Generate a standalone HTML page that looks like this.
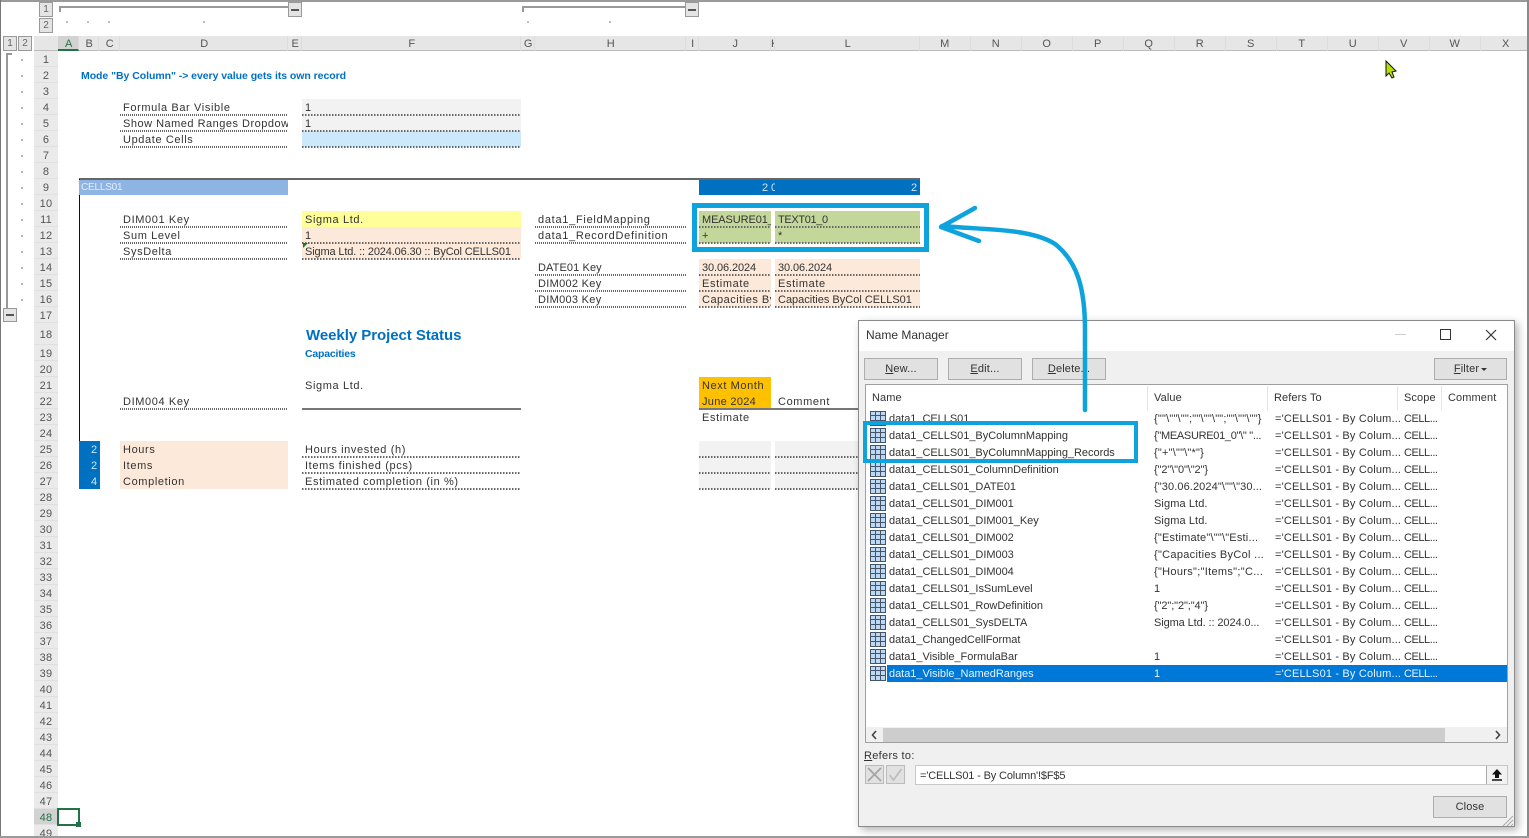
<!DOCTYPE html>
<html><head><meta charset="utf-8"><title>Name Manager</title>
<style>
html,body{margin:0;padding:0;background:#fff}
#p{position:relative;width:1529px;height:838px;overflow:hidden;background:#fff;font:11px "Liberation Sans",sans-serif;color:#333;letter-spacing:.62px;filter:blur(.35px)}
#p div{position:absolute;box-sizing:border-box;white-space:nowrap}
.t{height:16px;line-height:16px}
.dl{height:2px;background:repeating-linear-gradient(90deg,#666 0 1px,#fff 1px 2px)}
.dd{height:2px;background:repeating-linear-gradient(90deg,#666 0 1.5px,transparent 1.5px 3px)}
.dot{width:2px;height:2px;background:#bbb}
.h{top:36px;height:15px;line-height:17px;text-align:center;color:#555;border-right:1px solid #dcdcdc}
.g{padding-left:2px}
#rows{left:34px;top:51px;width:24px;background:#eaeaea;height:787px}
#rows div{position:static!important;height:16px;line-height:18px;text-align:center;color:#555;border-bottom:1px solid #e0e0e0;font-size:11px;letter-spacing:.2px}
.ob{background:#e4e4e4;border:1px solid #999;color:#666;text-align:center;font-size:10px;line-height:13px;letter-spacing:0}
.b{background:#e1e1e1;border:1px solid #adadad;text-align:center;line-height:20px;color:#333;height:22px;letter-spacing:.15px}
u{text-decoration:underline}
.i{left:870px;width:16px;height:15px;border:1px solid #44546a;background:linear-gradient(#44546a,#44546a) 0 3px/100% 1px no-repeat,linear-gradient(#44546a,#44546a) 0 8px/100% 1px no-repeat,linear-gradient(#44546a,#44546a) 4px 0/1px 100% no-repeat,linear-gradient(#44546a,#44546a) 9px 0/1px 100% no-repeat,#bcd8f3}
.n{left:889px;letter-spacing:-.03px}.v{left:1154px}.r{left:1275px;letter-spacing:.17px}.s{left:1404px;letter-spacing:-.45px}
.hd{letter-spacing:.1px}
</style></head><body><div id="p">

<!-- column headers -->
<div style="left:34px;top:36px;width:1493px;height:15px;background:#e6e6e6"></div>
<div style="left:34px;top:50px;width:1493px;height:1px;background:#bbb"></div>
<div class="h g" style="left:58px;width:21px;background:#d2d2d2;border-bottom:2px solid #217346;color:#217346">A</div>
<div class="h g" style="left:79px;width:20px">B</div>
<div class="h g" style="left:99px;width:21px">C</div>
<div class="h g" style="left:120px;width:168px">D</div>
<div class="h g" style="left:288px;width:14px">E</div>
<div class="h g" style="left:302px;width:219px">F</div>
<div class="h g" style="left:521px;width:14px">G</div>
<div class="h g" style="left:535px;width:151px">H</div>
<div class="h g" style="left:686px;width:13px">I</div>
<div class="h g" style="left:699px;width:72px">J</div>
<div class="h" style="left:771px;width:4px;overflow:hidden">K</div>
<div class="h g" style="left:775px;width:145px">L</div>
<div class="h" style="left:920px;width:51px">M</div>
<div class="h" style="left:971px;width:51px">N</div>
<div class="h" style="left:1022px;width:51px">O</div>
<div class="h" style="left:1073px;width:51px">P</div>
<div class="h" style="left:1124px;width:51px">Q</div>
<div class="h" style="left:1175px;width:51px">R</div>
<div class="h" style="left:1226px;width:51px">S</div>
<div class="h" style="left:1277px;width:51px">T</div>
<div class="h" style="left:1328px;width:51px">U</div>
<div class="h" style="left:1379px;width:51px">V</div>
<div class="h" style="left:1430px;width:51px">W</div>
<div class="h" style="left:1481px;width:51px">X</div>

<!-- row headers -->
<div id="rows"><div>1</div><div>2</div><div>3</div><div>4</div><div>5</div><div>6</div><div>7</div><div>8</div><div>9</div><div>10</div><div>11</div><div>12</div><div>13</div><div>14</div><div>15</div><div>16</div><div>17</div><div style="height:22px;line-height:24px">18</div><div>19</div><div>20</div><div>21</div><div>22</div><div>23</div><div>24</div><div>25</div><div>26</div><div>27</div><div>28</div><div>29</div><div>30</div><div>31</div><div>32</div><div>33</div><div>34</div><div>35</div><div>36</div><div>37</div><div>38</div><div>39</div><div>40</div><div>41</div><div>42</div><div>43</div><div>44</div><div>45</div><div>46</div><div>47</div><div style="background:#d2d2d2;color:#217346">48</div><div>49</div></div>

<!-- outline controls -->
<div class="ob" style="left:39px;top:2px;width:14px;height:15px">1</div>
<div class="ob" style="left:39px;top:18px;width:14px;height:15px">2</div>
<div class="ob" style="left:3px;top:36px;width:14px;height:15px">1</div>
<div class="ob" style="left:18px;top:36px;width:14px;height:15px">2</div>
<div style="left:59px;top:6px;width:230px;height:2px;background:#999"></div>
<div style="left:59px;top:6px;width:2px;height:6px;background:#999"></div>
<div class="ob" style="left:288px;top:2px;width:14px;height:15px"></div>
<div style="left:291px;top:9px;width:8px;height:2px;background:#555"></div>
<div style="left:522px;top:6px;width:164px;height:2px;background:#999"></div>
<div style="left:522px;top:6px;width:2px;height:6px;background:#999"></div>
<div class="ob" style="left:685px;top:2px;width:14px;height:15px"></div>
<div style="left:688px;top:9px;width:8px;height:2px;background:#555"></div>
<div class="dot" style="left:66px;top:21px"></div><div class="dot" style="left:87px;top:21px"></div><div class="dot" style="left:108px;top:21px"></div><div class="dot" style="left:203px;top:21px"></div><div class="dot" style="left:527px;top:21px"></div><div class="dot" style="left:609px;top:21px"></div>
<div style="left:6px;top:53px;width:6px;height:2px;background:#999"></div>
<div style="left:6px;top:53px;width:2px;height:258px;background:#999"></div>
<div class="ob" style="left:3px;top:308px;width:14px;height:14px"></div>
<div style="left:6px;top:314px;width:8px;height:2px;background:#555"></div>
<div class="dot" style="left:21px;top:59px"></div><div class="dot" style="left:21px;top:75px"></div><div class="dot" style="left:21px;top:91px"></div><div class="dot" style="left:21px;top:107px"></div><div class="dot" style="left:21px;top:123px"></div><div class="dot" style="left:21px;top:139px"></div><div class="dot" style="left:21px;top:155px"></div><div class="dot" style="left:21px;top:171px"></div><div class="dot" style="left:21px;top:187px"></div><div class="dot" style="left:21px;top:203px"></div><div class="dot" style="left:21px;top:219px"></div><div class="dot" style="left:21px;top:235px"></div><div class="dot" style="left:21px;top:251px"></div><div class="dot" style="left:21px;top:267px"></div><div class="dot" style="left:21px;top:283px"></div><div class="dot" style="left:21px;top:299px"></div>

<!-- sheet fills -->
<div style="left:302px;top:99px;width:219px;height:32px;background:#f2f2f2"></div>
<div style="left:302px;top:131px;width:219px;height:16px;background:#cce9fb"></div>
<div style="left:79px;top:178px;width:841px;height:2px;background:#666"></div>
<div style="left:79px;top:179px;width:1px;height:310px;background:#111"></div>
<div style="left:79px;top:180px;width:209px;height:15px;background:#8eb4e3"></div>
<div style="left:699px;top:180px;width:221px;height:15px;background:#0070c0"></div>
<div style="left:302px;top:211px;width:219px;height:16px;background:#ffff99"></div>
<div style="left:302px;top:227px;width:219px;height:32px;background:#fde9d9"></div>
<div style="left:699px;top:211px;width:72px;height:32px;background:#c4d79b"></div>
<div style="left:775px;top:211px;width:145px;height:32px;background:#c4d79b"></div>
<div style="left:699px;top:259px;width:72px;height:48px;background:#fde9d9"></div>
<div style="left:775px;top:259px;width:145px;height:48px;background:#fde9d9"></div>
<div style="left:699px;top:377px;width:72px;height:32px;background:#ffc000"></div>
<div style="left:79px;top:441px;width:21px;height:48px;background:#0070c0"></div>
<div style="left:120px;top:441px;width:168px;height:48px;background:#fde9d9"></div>
<div style="left:699px;top:441px;width:72px;height:48px;background:#f2f2f2"></div>
<div style="left:775px;top:441px;width:90px;height:48px;background:#f2f2f2"></div>

<!-- dotted -->
<div class="dl" style="left:120px;top:114px;width:168px"></div><div class="dl" style="left:120px;top:130px;width:168px"></div><div class="dl" style="left:120px;top:146px;width:168px"></div>
<div class="dd" style="left:302px;top:114px;width:219px"></div><div class="dd" style="left:302px;top:130px;width:219px"></div><div class="dd" style="left:302px;top:146px;width:219px"></div>
<div class="dl" style="left:120px;top:226px;width:168px"></div><div class="dl" style="left:120px;top:242px;width:168px"></div><div class="dl" style="left:120px;top:258px;width:168px"></div>
<div class="dd" style="left:302px;top:242px;width:219px"></div><div class="dd" style="left:302px;top:258px;width:219px"></div>
<div class="dl" style="left:535px;top:226px;width:151px"></div><div class="dl" style="left:535px;top:242px;width:151px"></div>
<div class="dl" style="left:535px;top:274px;width:151px"></div><div class="dl" style="left:535px;top:290px;width:151px"></div><div class="dl" style="left:535px;top:306px;width:151px"></div>
<div class="dd" style="left:699px;top:226px;width:72px"></div><div class="dd" style="left:775px;top:226px;width:145px"></div>
<div class="dd" style="left:699px;top:242px;width:72px"></div><div class="dd" style="left:775px;top:242px;width:145px"></div>
<div class="dd" style="left:699px;top:274px;width:72px"></div><div class="dd" style="left:775px;top:274px;width:145px"></div>
<div class="dd" style="left:699px;top:290px;width:72px"></div><div class="dd" style="left:775px;top:290px;width:145px"></div>
<div class="dd" style="left:699px;top:306px;width:72px"></div><div class="dd" style="left:775px;top:306px;width:145px"></div>
<div class="dd" style="left:302px;top:456px;width:219px"></div><div class="dd" style="left:302px;top:472px;width:219px"></div><div class="dd" style="left:302px;top:488px;width:219px"></div>
<div class="dd" style="left:699px;top:456px;width:72px"></div><div class="dd" style="left:699px;top:472px;width:72px"></div><div class="dd" style="left:699px;top:488px;width:72px"></div>
<div class="dd" style="left:775px;top:456px;width:90px"></div><div class="dd" style="left:775px;top:472px;width:90px"></div><div class="dd" style="left:775px;top:488px;width:90px"></div>
<div class="dl" style="left:120px;top:408px;width:168px"></div>
<div style="left:302px;top:408px;width:219px;height:2px;background:#777"></div>
<div style="left:699px;top:408px;width:165px;height:2px;background:#777"></div>

<!-- sheet text -->
<div style="left:0;top:1px;width:0;height:0">
<div class="t" style="left:81px;top:67px;color:#0070c0;font-weight:bold;font-size:10.5px;letter-spacing:-.05px">Mode "By Column" -&gt; every value gets its own record</div>
<div class="t" style="left:123px;top:99px">Formula Bar Visible</div>
<div class="t" style="left:123px;top:115px;width:165px;overflow:hidden;letter-spacing:.5px">Show Named Ranges Dropdown</div>
<div class="t" style="left:123px;top:131px">Update Cells</div>
<div class="t" style="left:305px;top:99px">1</div>
<div class="t" style="left:305px;top:115px">1</div>
<div class="t" style="left:81px;top:179px;color:#e4eefa;letter-spacing:-.2px;font-size:10px">CELLS01</div>
<div class="t" style="left:762px;top:179px;color:#cfe6f7;letter-spacing:2px">2</div>
<div class="t" style="left:771px;top:179px;color:#cfe6f7;width:4px;overflow:hidden">0</div>
<div class="t" style="left:911px;top:179px;color:#cfe6f7">2</div>
<div class="t" style="left:123px;top:211px">DIM001 Key</div>
<div class="t" style="left:123px;top:227px">Sum Level</div>
<div class="t" style="left:123px;top:243px">SysDelta</div>
<div class="t" style="left:305px;top:211px">Sigma Ltd.</div>
<div class="t" style="left:305px;top:227px">1</div>
<div class="t" style="left:305px;top:243px;letter-spacing:-.14px">Sigma Ltd. :: 2024.06.30 :: ByCol CELLS01</div>
<div style="left:303px;top:242px;width:0;height:0;border-top:5px solid #1b7a2c;border-right:5px solid transparent"></div>
<div class="t" style="left:538px;top:211px;letter-spacing:.72px">data1_FieldMapping</div>
<div class="t" style="left:538px;top:227px;letter-spacing:.7px">data1_RecordDefinition</div>
<div class="t" style="left:538px;top:259px;letter-spacing:.1px">DATE01 Key</div>
<div class="t" style="left:538px;top:275px;letter-spacing:.3px">DIM002 Key</div>
<div class="t" style="left:538px;top:291px;letter-spacing:.3px">DIM003 Key</div>
<div class="t" style="left:702px;top:211px;width:69px;overflow:hidden;letter-spacing:-.1px">MEASURE01_0</div>
<div class="t" style="left:778px;top:211px;letter-spacing:-.35px">TEXT01_0</div>
<div class="t" style="left:702px;top:227px">+</div>
<div class="t" style="left:778px;top:227px">*</div>
<div class="t" style="left:702px;top:259px;letter-spacing:-.1px">30.06.2024</div>
<div class="t" style="left:778px;top:259px;letter-spacing:-.1px">30.06.2024</div>
<div class="t" style="left:702px;top:275px">Estimate</div>
<div class="t" style="left:778px;top:275px">Estimate</div>
<div class="t" style="left:702px;top:291px;width:69px;overflow:hidden;letter-spacing:.5px">Capacities ByCol</div>
<div class="t" style="left:778px;top:291px;letter-spacing:0">Capacities ByCol CELLS01</div>
<div class="t" style="left:306px;top:327px;color:#0070c0;font-weight:bold;font-size:15px;letter-spacing:-.05px">Weekly Project Status</div>
<div class="t" style="left:305px;top:345px;color:#0070c0;font-weight:bold;font-size:10.5px;letter-spacing:-.2px">Capacities</div>
<div class="t" style="left:305px;top:377px">Sigma Ltd.</div>
<div class="t" style="left:123px;top:393px">DIM004 Key</div>
<div class="t" style="left:702px;top:377px;letter-spacing:.6px">Next Month</div>
<div class="t" style="left:702px;top:393px;letter-spacing:.3px">June 2024</div>
<div class="t" style="left:778px;top:393px">Comment</div>
<div class="t" style="left:702px;top:409px">Estimate</div>
<div class="t" style="left:91px;top:441px;color:#cfe6f7">2</div>
<div class="t" style="left:91px;top:457px;color:#cfe6f7">2</div>
<div class="t" style="left:91px;top:473px;color:#cfe6f7">4</div>
<div class="t" style="left:123px;top:441px">Hours</div>
<div class="t" style="left:123px;top:457px">Items</div>
<div class="t" style="left:123px;top:473px">Completion</div>
<div class="t" style="left:305px;top:441px">Hours invested (h)</div>
<div class="t" style="left:305px;top:457px">Items finished (pcs)</div>
<div class="t" style="left:305px;top:473px">Estimated completion (in %)</div>
</div>

<!-- selected cell -->
<div style="left:57px;top:808px;width:23px;height:18px;border:2px solid #217346"></div>
<div style="left:76px;top:822px;width:5px;height:5px;background:#217346;border:0"></div>

<!-- dialog -->
<div style="left:858px;top:320px;width:657px;height:507px;background:#f0f0f0;border:1px solid #8a8a8a;box-shadow:3px 3px 8px rgba(0,0,0,.3)"></div>
<div style="left:859px;top:321px;width:655px;height:30px;background:#fff"></div>
<div class="t" style="left:866px;top:327px;font-size:12px;letter-spacing:0">Name Manager</div>
<div style="left:1395px;top:334px;width:11px;height:1px;background:#ccc"></div>
<div style="left:1440px;top:329px;width:11px;height:11px;border:1.5px solid #333"></div>
<svg style="position:absolute;left:1485px;top:329px" width="12" height="12"><path d="M1 1L11 11M11 1L1 11" stroke="#333" stroke-width="1.2" fill="none"/></svg>
<div class="b" style="left:864px;top:358px;width:74px"><u>N</u>ew...</div>
<div class="b" style="left:948px;top:358px;width:74px"><u>E</u>dit...</div>
<div class="b" style="left:1032px;top:358px;width:74px"><u>D</u>elete...</div>
<div class="b" style="left:1434px;top:358px;width:73px;height:22px;padding-right:8px"><u>F</u>ilter</div>
<div style="left:1481px;top:368px;width:0;height:0;border-left:3px solid transparent;border-right:3px solid transparent;border-top:3px solid #333"></div>
<div style="left:865px;top:384px;width:643px;height:359px;background:#fff;border:1px solid #a0a0a0"></div>
<div class="t hd" style="left:872px;top:390px">Name</div>
<div class="t hd" style="left:1154px;top:390px">Value</div>
<div class="t hd" style="left:1274px;top:390px">Refers To</div>
<div class="t hd" style="left:1404px;top:390px">Scope</div>
<div class="t hd" style="left:1448px;top:390px">Comment</div>
<div style="left:1147px;top:386px;width:1px;height:24px;background:#e5e5e5"></div>
<div style="left:1267px;top:386px;width:1px;height:24px;background:#e5e5e5"></div>
<div style="left:1397px;top:386px;width:1px;height:24px;background:#e5e5e5"></div>
<div style="left:1441px;top:386px;width:1px;height:24px;background:#e5e5e5"></div>

<div style="left:887px;top:665px;width:620px;height:17px;background:#0078d7"></div>

<div class="i" style="top:411px"></div><div class="i" style="top:428px"></div><div class="i" style="top:445px"></div><div class="i" style="top:462px"></div><div class="i" style="top:479px"></div><div class="i" style="top:496px"></div><div class="i" style="top:513px"></div><div class="i" style="top:530px"></div><div class="i" style="top:547px"></div><div class="i" style="top:564px"></div><div class="i" style="top:581px"></div><div class="i" style="top:598px"></div><div class="i" style="top:615px"></div><div class="i" style="top:632px"></div><div class="i" style="top:649px"></div><div class="i" style="top:666px"></div>

<div class="t n" style="top:411px">data1_CELLS01</div>
<div class="t n" style="top:428px">data1_CELLS01_ByColumnMapping</div>
<div class="t n" style="top:445px">data1_CELLS01_ByColumnMapping_Records</div>
<div class="t n" style="top:462px">data1_CELLS01_ColumnDefinition</div>
<div class="t n" style="top:479px">data1_CELLS01_DATE01</div>
<div class="t n" style="top:496px">data1_CELLS01_DIM001</div>
<div class="t n" style="top:513px">data1_CELLS01_DIM001_Key</div>
<div class="t n" style="top:530px">data1_CELLS01_DIM002</div>
<div class="t n" style="top:547px">data1_CELLS01_DIM003</div>
<div class="t n" style="top:564px">data1_CELLS01_DIM004</div>
<div class="t n" style="top:581px">data1_CELLS01_IsSumLevel</div>
<div class="t n" style="top:598px">data1_CELLS01_RowDefinition</div>
<div class="t n" style="top:615px">data1_CELLS01_SysDELTA</div>
<div class="t n" style="top:632px">data1_ChangedCellFormat</div>
<div class="t n" style="top:649px">data1_Visible_FormulaBar</div>
<div class="t n" style="top:666px;color:#e8f4fd">data1_Visible_NamedRanges</div>

<div class="t v" style="top:411px;letter-spacing:.2px">{""\""\"";""\""\"";""\""\""}</div>
<div class="t v" style="top:428px;letter-spacing:-.3px">{"MEASURE01_0"\" "...</div>
<div class="t v" style="top:445px;letter-spacing:.2px">{"+"\""\"*"}</div>
<div class="t v" style="top:462px;letter-spacing:-.1px">{"2"\"0"\"2"}</div>
<div class="t v" style="top:479px;letter-spacing:.1px">{"30.06.2024"\""\"30...</div>
<div class="t v" style="top:496px;letter-spacing:.1px">Sigma Ltd.</div>
<div class="t v" style="top:513px;letter-spacing:.1px">Sigma Ltd.</div>
<div class="t v" style="top:530px;letter-spacing:.2px">{"Estimate"\""\"Esti...</div>
<div class="t v" style="top:547px;letter-spacing:.3px">{"Capacities ByCol ...</div>
<div class="t v" style="top:564px;letter-spacing:.3px">{"Hours";"Items";"C...</div>
<div class="t v" style="top:581px">1</div>
<div class="t v" style="top:598px;letter-spacing:-.1px">{"2";"2";"4"}</div>
<div class="t v" style="top:615px;letter-spacing:-.1px">Sigma Ltd. :: 2024.0...</div>
<div class="t v" style="top:649px">1</div>
<div class="t v" style="top:666px;color:#e8f4fd">1</div>

<div class="t r" style="top:411px">='CELLS01 - By Colum...</div>
<div class="t r" style="top:428px">='CELLS01 - By Colum...</div>
<div class="t r" style="top:445px">='CELLS01 - By Colum...</div>
<div class="t r" style="top:462px">='CELLS01 - By Colum...</div>
<div class="t r" style="top:479px">='CELLS01 - By Colum...</div>
<div class="t r" style="top:496px">='CELLS01 - By Colum...</div>
<div class="t r" style="top:513px">='CELLS01 - By Colum...</div>
<div class="t r" style="top:530px">='CELLS01 - By Colum...</div>
<div class="t r" style="top:547px">='CELLS01 - By Colum...</div>
<div class="t r" style="top:564px">='CELLS01 - By Colum...</div>
<div class="t r" style="top:581px">='CELLS01 - By Colum...</div>
<div class="t r" style="top:598px">='CELLS01 - By Colum...</div>
<div class="t r" style="top:615px">='CELLS01 - By Colum...</div>
<div class="t r" style="top:632px">='CELLS01 - By Colum...</div>
<div class="t r" style="top:649px">='CELLS01 - By Colum...</div>
<div class="t r" style="top:666px;color:#e8f4fd">='CELLS01 - By Colum...</div>

<div class="t s" style="top:411px">CELL...</div><div class="t s" style="top:428px">CELL...</div><div class="t s" style="top:445px">CELL...</div><div class="t s" style="top:462px">CELL...</div><div class="t s" style="top:479px">CELL...</div><div class="t s" style="top:496px">CELL...</div><div class="t s" style="top:513px">CELL...</div><div class="t s" style="top:530px">CELL...</div><div class="t s" style="top:547px">CELL...</div><div class="t s" style="top:564px">CELL...</div><div class="t s" style="top:581px">CELL...</div><div class="t s" style="top:598px">CELL...</div><div class="t s" style="top:615px">CELL...</div><div class="t s" style="top:632px">CELL...</div><div class="t s" style="top:649px">CELL...</div><div class="t s" style="top:666px;color:#e8f4fd">CELL...</div>

<!-- scrollbar -->
<div style="left:866px;top:727px;width:641px;height:15px;background:#f0f0f0"></div>
<div style="left:883px;top:728px;width:562px;height:14px;background:#cdcdcd"></div>
<svg style="position:absolute;left:870px;top:730px" width="10" height="10"><path d="M6 1L2.5 5L6 9" stroke="#444" stroke-width="1.6" fill="none"/></svg>
<svg style="position:absolute;left:1493px;top:730px" width="10" height="10"><path d="M3 1L6.5 5L3 9" stroke="#444" stroke-width="1.6" fill="none"/></svg>

<div class="t" style="left:864px;top:748px;letter-spacing:.3px"><u>R</u>efers to:</div>
<div style="left:865px;top:765px;width:19px;height:19px;background:#e1e1e1;border:1px solid #bbb"></div>
<svg style="position:absolute;left:867px;top:767px" width="15" height="15"><path d="M1 1L14 14M14 1L1 14" stroke="#a5a5a5" stroke-width="1.8" fill="none"/></svg>
<div style="left:886px;top:765px;width:19px;height:19px;background:#e1e1e1;border:1px solid #bbb"></div>
<svg style="position:absolute;left:888px;top:767px" width="15" height="15"><path d="M1.5 8L5.5 13L13.5 2" stroke="#bdbdbd" stroke-width="1.8" fill="none"/></svg>
<div style="left:915px;top:765px;width:593px;height:20px;background:#fff;border:1px solid #c8c8c8"></div>
<div class="t" style="left:920px;top:768px;letter-spacing:-.15px">='CELLS01 - By Column'!$F$5</div>
<div style="left:1486px;top:766px;width:21px;height:18px;background:#f2f2f2;border-left:1px solid #aaa"></div>
<svg style="position:absolute;left:1491px;top:768px" width="12" height="14"><path d="M6 1L11 6.5H8V10H4V6.5H1Z" fill="#111"/><path d="M1 12H11" stroke="#111" stroke-width="1.5"/></svg>
<div class="b" style="left:1433px;top:796px;width:74px">Close</div>
<svg style="position:absolute;left:1502px;top:815px" width="12" height="11"><path d="M11 1L1 11M11 5L5 11M11 9L9 11" stroke="#aaa" stroke-width="1" fill="none"/></svg>

<!-- annotations -->
<svg style="position:absolute;left:0;top:0" width="1529" height="838">
<rect x="694.5" y="205.5" width="232" height="44" fill="none" stroke="#0fa3de" stroke-width="5"/>
<rect x="865" y="423" width="271" height="38" fill="none" stroke="#0fa3de" stroke-width="4"/>
<path d="M1085 410L1085 330C1085 290 1078 262 1055 244C1030 228 985 230 942 226" fill="none" stroke="#0fa3de" stroke-width="4.5" stroke-linecap="round"/>
<path d="M975 208L941 227L979 241" fill="none" stroke="#0fa3de" stroke-width="4.5" stroke-linecap="round" stroke-linejoin="round"/>
<path d="M1386 61L1386 76L1389 73L1392 78L1394 77L1392 72L1396 71Z" fill="#b4e000" stroke="#111" stroke-width="1"/>
</svg>

<!-- window frame -->
<div style="left:0;top:0;width:1529px;height:2px;background:#9a9a9a"></div>
<div style="left:0;top:0;width:1px;height:838px;background:#777"></div>
<div style="left:1527px;top:0;width:2px;height:838px;background:#8a8a8a"></div>
<div style="left:0;top:836px;width:1529px;height:2px;background:#9a9a9a"></div>
</div></body></html>
